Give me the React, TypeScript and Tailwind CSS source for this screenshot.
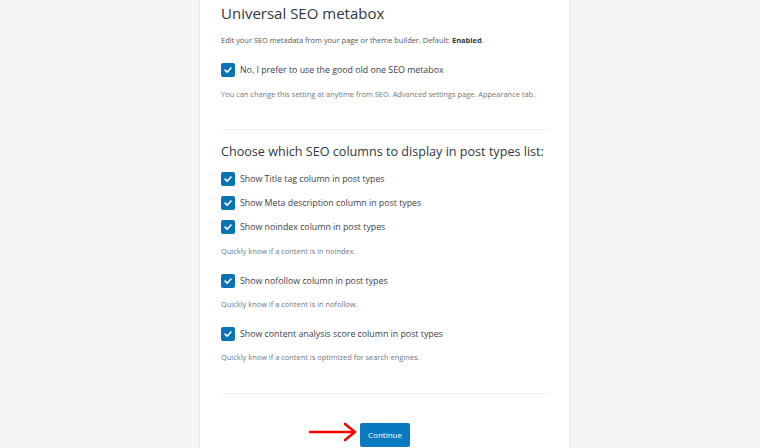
const font = { fontFamily: '"Open Sans", "Noto Sans", sans-serif' };

function Check() {
  return (
    <span className="flex h-[14px] w-[14px] shrink-0 items-center justify-center rounded-[2px] bg-[#0a73b4]">
      <svg viewBox="0 0 12 12" className="h-[10px] w-[10px]">
        <path d="M2.5 6.2 L5 8.6 L9.6 3.6" fill="none" stroke="#fff" strokeWidth="1.9" strokeLinecap="round" strokeLinejoin="round" />
      </svg>
    </span>
  );
}

function CheckRow({ label, className }: { label: string; className?: string }) {
  return (
    <div className={`flex h-[24px] items-center gap-[5px] ${className ?? ""}`}>
      <Check />
      <span className="mt-[2px] whitespace-nowrap text-[8.8px] text-[#3c434a]">{label}</span>
    </div>
  );
}

function Note({ children, className }: { children: React.ReactNode; className?: string }) {
  return (
    <p className={`h-[14px] whitespace-nowrap text-[7.45px] leading-[14px] text-[#72777c] ${className ?? ""}`}>{children}</p>
  );
}

export default function App() {
  return (
    <div className="h-[448px] w-[760px] overflow-hidden bg-[#f3f4f4]" style={font}>
      <div className="ml-[199px] h-full w-[371px] border-x border-[#e8eaea] bg-white pl-[21px] pr-[20px]">
        <h2 className="h-[26px] text-[15px] leading-[26px] text-[#32373c]">Universal SEO metabox</h2>
        <p className="mt-[7px] h-[14px] whitespace-nowrap text-[7.45px] leading-[14px] text-[#50575e]">
          Edit your SEO metadata from your page or theme builder. Default: <b className="text-[#32373c]">Enabled</b>.
        </p>
        <CheckRow label="No, I prefer to use the good old one SEO metabox" className="mt-[11px]" />
        <Note className="mt-[5px]">You can change this setting at anytime from SEO. Advanced settings page. Appearance tab.</Note>
        <div className="mt-[28px] h-px bg-[#f0f0f1]" />
        <h3 className="mt-[12px] h-[20px] whitespace-nowrap text-[12.6px] leading-[20px] text-[#32373c]">
          Choose which SEO columns to display in post types list:
        </h3>
        <CheckRow label="Show Title tag column in post types" className="mt-[5px]" />
        <CheckRow label="Show Meta description column in post types" />
        <CheckRow label="Show noindex column in post types" />
        <Note className="mt-[5px]">Quickly know if a content is in noindex.</Note>
        <CheckRow label="Show nofollow column in post types" className="mt-[11px]" />
        <Note className="mt-[4px]">Quickly know if a content is in nofollow.</Note>
        <CheckRow label="Show content analysis score column in post types" className="mt-[11px]" />
        <Note className="mt-[4px]">Quickly know if a content is optimized for search engines.</Note>
        <div className="mt-[29px] h-px bg-[#f0f0f1]" />
        <div className="mt-[26px] flex justify-center">
          <div className="relative">
            <svg className="absolute right-[52px] top-[1px] h-[22px] w-[50px]" viewBox="0 0 50 22">
              <path d="M2 11 H46" stroke="#f00" strokeWidth="2.6" strokeLinecap="round" />
              <path d="M37 3 L47 11 L37 19" fill="none" stroke="#f00" strokeWidth="2.6" strokeLinecap="round" strokeLinejoin="round" />
            </svg>
            <button className="h-[24px] w-[50px] rounded-[2px] bg-[#0a7ac0] text-[8px] text-white">Continue</button>
          </div>
        </div>
      </div>
    </div>
  );
}
